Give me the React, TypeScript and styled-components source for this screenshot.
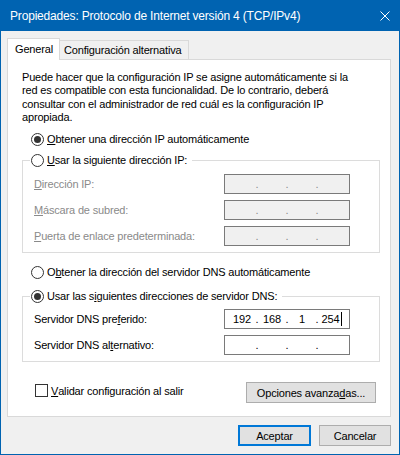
import React, {FC} from 'react';
import styled, {createGlobalStyle, css} from 'styled-components';

/*
 * Constants.
 */

const accent = '#0063b1';
const uiFont = `"Liberation Sans", Arial, sans-serif`;
const disabledText = '#8a8a8a';

/*
 * Style.
 */

const GlobalStyle = createGlobalStyle`
  html, body {
    margin: 0;
    padding: 0;
    background: #f0f0f0;
  }
`;

const StyledWindowDiv = styled.div`
  width: 400px;
  height: 455px;
  box-sizing: border-box;
  border: 1px solid ${accent};
  border-top: none;
  display: flex;
  flex-direction: column;
  background: #f0f0f0;
  font-family: ${uiFont};
  font-size: 11px;
  letter-spacing: -0.17px;
  color: #000;
`;

const StyledTitleBarDiv = styled.div`
  height: 31px;
  flex-shrink: 0;
  background: ${accent};
  color: #fff;
  display: flex;
  align-items: center;
  justify-content: space-between;
  padding-left: 9px;
  font-size: 12px;
  letter-spacing: -0.18px;
`;

const StyledCloseSpan = styled.span`
  display: flex;
  margin-right: 9px;
  margin-top: 1px;
`;

const StyledBodyDiv = styled.div`
  flex: 1;
  display: flex;
  flex-direction: column;
  padding: 7px 8px 0 6px;
`;

const StyledTabStripDiv = styled.div`
  display: flex;
  align-items: flex-end;
  height: 21px;
`;

interface StyledTabDivProps {
  $active: boolean;
}

const StyledTabDiv = styled.div<StyledTabDivProps>`
  box-sizing: border-box;
  border: 1px solid #d9d9d9;
  border-bottom: none;
  display: flex;
  align-items: center;
  white-space: nowrap;

  ${p =>
    p.$active
      ? css`
          height: 22px;
          margin-bottom: -1px;
          background: #fff;
          padding: 0 7px 1px 7px;
          width: 53px;
          position: relative;
          z-index: 1;
        `
      : css`
          height: 19px;
          background: #f0f0f0;
          border-left: none;
          padding: 0 4px 0 4px;
          width: 129px;
        `};
`;

const StyledPanelDiv = styled.div`
  box-sizing: border-box;
  height: 358px;
  border: 1px solid #d9d9d9;
  background: #fff;
  display: flex;
  flex-direction: column;
`;

const StyledIntroP = styled.p`
  margin: 11px 0 0 14px;
  line-height: 13.33px;
  white-space: nowrap;
`;

const StyledRadioRowDiv = styled.div`
  display: flex;
  align-items: center;
  height: 16px;
  margin-left: 23px;
  white-space: nowrap;
`;

interface StyledRadioSpanProps {
  $checked: boolean;
}

const StyledRadioSpan = styled.span<StyledRadioSpanProps>`
  width: 13px;
  height: 13px;
  box-sizing: border-box;
  border: 1px solid #333;
  border-radius: 50%;
  background: #fff;
  display: flex;
  align-items: center;
  justify-content: center;
  flex-shrink: 0;
  margin-right: 3px;

  &::after {
    content: '';
    width: 7px;
    height: 7px;
    border-radius: 50%;
    background: #333;
    display: ${p => (p.$checked ? 'block' : 'none')};
  }
`;

const StyledGroupFieldset = styled.fieldset`
  box-sizing: border-box;
  width: 358px;
  margin: 0 0 0 14px;
  padding: 0;
  border: 1px solid #dcdcdc;
  min-inline-size: auto;
`;

const StyledGroupLegend = styled.legend`
  margin-left: 7px;
  padding: 0 5px 0 1px;
  height: 16px;
  display: flex;
  align-items: center;
  white-space: nowrap;
`;

interface StyledFieldGridDivProps {
  $top: number;
}

const StyledFieldGridDiv = styled.div<StyledFieldGridDivProps>`
  display: grid;
  grid-template-columns: 190px 126px;
  grid-auto-rows: 20px;
  row-gap: 6px;
  align-items: center;
  padding: ${p => p.$top}px 0 6px 11px;
`;

interface StyledFieldLabelSpanProps {
  $disabled: boolean;
}

const StyledFieldLabelSpan = styled.span<StyledFieldLabelSpanProps>`
  white-space: nowrap;
  color: ${p => (p.$disabled ? disabledText : '#000')};
`;

interface StyledIpBoxDivProps {
  $disabled: boolean;
}

const StyledIpBoxDiv = styled.div<StyledIpBoxDivProps>`
  box-sizing: border-box;
  height: 20px;
  border: 1px solid #7a7a7a;
  background: ${p => (p.$disabled ? '#f0f0f0' : '#fff')};
  color: ${p => (p.$disabled ? disabledText : '#000')};
  display: flex;
  align-items: center;
  padding-left: 4px;
`;

const StyledIpSegmentSpan = styled.span`
  width: 26px;
  display: flex;
  justify-content: center;
  align-items: center;
  white-space: nowrap;
`;

const StyledIpDotSpan = styled.span`
  width: 4px;
  display: flex;
  justify-content: center;
`;

const StyledCaretSpan = styled.span`
  display: inline-block;
  width: 1px;
  height: 14px;
  background: #000;
  margin-left: 2px;
`;

const StyledFooterRowDiv = styled.div`
  display: flex;
  align-items: flex-start;
  justify-content: space-between;
  margin: 20px 14px 0 27px;
`;

const StyledCheckLabel = styled.label`
  display: flex;
  align-items: center;
  height: 13px;
  margin-top: 2px;
  white-space: nowrap;
`;

const StyledCheckBoxSpan = styled.span`
  width: 13px;
  height: 13px;
  box-sizing: border-box;
  border: 1px solid #333;
  background: #fff;
  margin-right: 3px;
`;

interface StyledButtonProps {
  $width: number;
  $default?: boolean;
}

const StyledButton = styled.button<StyledButtonProps>`
  box-sizing: border-box;
  width: ${p => p.$width}px;
  height: 21px;
  padding: 0;
  background: #e1e1e1;
  border: 1px solid #adadad;
  font-family: ${uiFont};
  font-size: 11px;
  letter-spacing: -0.17px;
  color: #000;

  ${p =>
    p.$default &&
    css`
      border: 2px solid #0078d7;
    `};
`;

const StyledButtonRowDiv = styled.div`
  display: flex;
  justify-content: flex-end;
  gap: 8px;
  margin-top: 8px;
`;

const StyledAccessKey = styled.u`
  text-decoration: underline;
  text-underline-offset: 1px;
`;

/*
 * Helpers.
 */

interface IpBoxProps {
  parts?: string[];
  disabled?: boolean;
  caret?: boolean;
}

const IpBox: FC<IpBoxProps> = ({parts = ['', '', '', ''], disabled = false, caret = false}) => (
  <StyledIpBoxDiv $disabled={disabled}>
    {parts.map((part, i) => (
      <React.Fragment key={i}>
        {i > 0 && <StyledIpDotSpan>.</StyledIpDotSpan>}
        <StyledIpSegmentSpan>
          {part}
          {caret && i === parts.length - 1 && <StyledCaretSpan />}
        </StyledIpSegmentSpan>
      </React.Fragment>
    ))}
  </StyledIpBoxDiv>
);

function withKey(text: string, index: number) {
  return (
    <>
      {text.slice(0, index)}
      <StyledAccessKey>{text[index]}</StyledAccessKey>
      {text.slice(index + 1)}
    </>
  );
}

/*
 * Component.
 */

export default function App() {
  return (
    <>
      <GlobalStyle />
      <StyledWindowDiv>
        <StyledTitleBarDiv>
          <span>Propiedades: Protocolo de Internet versión 4 (TCP/IPv4)</span>
          <StyledCloseSpan>
            <svg width="10" height="10" viewBox="0 0 10 10">
              <path d="M0.5 0.5L9.5 9.5M9.5 0.5L0.5 9.5" stroke="#fff" strokeWidth="1" fill="none" />
            </svg>
          </StyledCloseSpan>
        </StyledTitleBarDiv>

        <StyledBodyDiv>
          <StyledTabStripDiv>
            <StyledTabDiv $active>General</StyledTabDiv>
            <StyledTabDiv $active={false}>Configuración alternativa</StyledTabDiv>
          </StyledTabStripDiv>

          <StyledPanelDiv>
            <StyledIntroP>
              Puede hacer que la configuración IP se asigne automáticamente si la
              <br />
              red es compatible con esta funcionalidad. De lo contrario, deberá
              <br />
              consultar con el administrador de red cuál es la configuración IP
              <br />
              apropiada.
            </StyledIntroP>

            <StyledRadioRowDiv style={{marginTop: 7}}>
              <StyledRadioSpan $checked />
              {withKey('Obtener una dirección IP automáticamente', 0)}
            </StyledRadioRowDiv>

            <StyledGroupFieldset style={{marginTop: 5}}>
              <StyledGroupLegend>
                <StyledRadioSpan $checked={false} />
                {withKey('Usar la siguiente dirección IP:', 0)}
              </StyledGroupLegend>
              <StyledFieldGridDiv $top={6}>
                <StyledFieldLabelSpan $disabled>{withKey('Dirección IP:', 0)}</StyledFieldLabelSpan>
                <IpBox disabled />
                <StyledFieldLabelSpan $disabled>{withKey('Máscara de subred:', 0)}</StyledFieldLabelSpan>
                <IpBox disabled />
                <StyledFieldLabelSpan $disabled>{withKey('Puerta de enlace predeterminada:', 0)}</StyledFieldLabelSpan>
                <IpBox disabled />
              </StyledFieldGridDiv>
            </StyledGroupFieldset>

            <StyledRadioRowDiv style={{marginTop: 11}}>
              <StyledRadioSpan $checked={false} />
              {withKey('Obtener la dirección del servidor DNS automáticamente', 1)}
            </StyledRadioRowDiv>

            <StyledGroupFieldset style={{marginTop: 8}}>
              <StyledGroupLegend>
                <StyledRadioSpan $checked />
                {withKey('Usar las siguientes direcciones de servidor DNS:', 10)}
              </StyledGroupLegend>
              <StyledFieldGridDiv $top={5}>
                <StyledFieldLabelSpan $disabled={false}>
                  {withKey('Servidor DNS preferido:', 16)}
                </StyledFieldLabelSpan>
                <IpBox parts={['192', '168', '1', '254']} caret />
                <StyledFieldLabelSpan $disabled={false}>
                  {withKey('Servidor DNS alternativo:', 15)}
                </StyledFieldLabelSpan>
                <IpBox />
              </StyledFieldGridDiv>
            </StyledGroupFieldset>

            <StyledFooterRowDiv>
              <StyledCheckLabel>
                <StyledCheckBoxSpan />
                {withKey('Validar configuración al salir', 0)}
              </StyledCheckLabel>
              <StyledButton $width={130}>{withKey('Opciones avanzadas...', 15)}</StyledButton>
            </StyledFooterRowDiv>
          </StyledPanelDiv>

          <StyledButtonRowDiv>
            <StyledButton $width={73} $default>
              Aceptar
            </StyledButton>
            <StyledButton $width={72}>Cancelar</StyledButton>
          </StyledButtonRowDiv>
        </StyledBodyDiv>
      </StyledWindowDiv>
    </>
  );
}
